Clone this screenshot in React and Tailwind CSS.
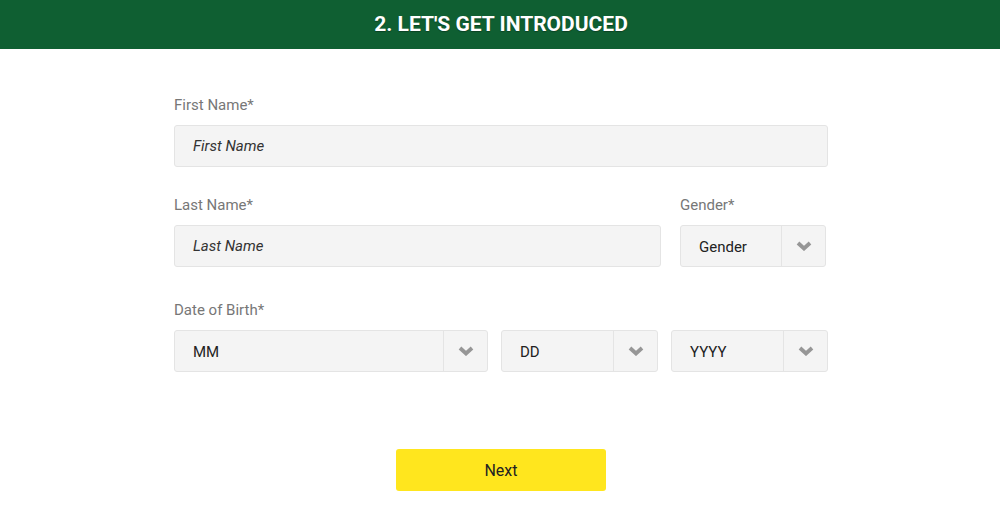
import React from "react";

function Chevron() {
  return (
    <svg width="16" height="10" viewBox="0 0 16 10" className="block">
      <polyline points="2,2 8,7.5 14,2" fill="none" stroke="#969696" strokeWidth="3.8" strokeLinecap="butt" strokeLinejoin="miter" />
    </svg>
  );
}

function Select({ value, className }) {
  return (
    <div className={"flex h-[42px] rounded-[3px] border border-[#e4e4e4] bg-[#f4f4f4] " + className}>
      <div className="flex flex-1 items-center pl-[18px] pt-[2px] text-[15px] text-[#222]">{value}</div>
      <div className="flex w-[44px] items-center justify-center border-l border-[#e4e4e4]">
        <Chevron />
      </div>
    </div>
  );
}

function Input({ placeholder, className }) {
  return (
    <div className={"flex h-[42px] items-center rounded-[3px] border border-[#e4e4e4] bg-[#f4f4f4] pl-[18px] text-[15px] italic text-[#333] " + className}>
      {placeholder}
    </div>
  );
}

function Label({ children }) {
  return <div className="h-[20px] pt-[1px] text-[15px] leading-[20px] text-[#777]">{children}</div>;
}

export default function App() {
  return (
    <div className="min-h-[531px] bg-white" style={{ fontFamily: "Roboto, 'Liberation Sans', sans-serif" }}>
      <div className="flex h-[49px] items-center justify-center bg-[#0f5f32] pl-[2px]">
        <h1 className="text-[21px] font-bold text-white [text-shadow:0_1px_1px_rgba(0,0,0,0.3)]">2. LET'S GET INTRODUCED</h1>
      </div>
      <div className="mx-auto flex w-[654px] translate-x-[1px] flex-col pt-[45px]">
        <Label>First Name*</Label>
        <Input placeholder="First Name" className="mt-[11px]" />
        <div className="mt-[27px] flex gap-[19px]">
          <div className="flex w-[487px] flex-col">
            <Label>Last Name*</Label>
            <Input placeholder="Last Name" className="mt-[11px]" />
          </div>
          <div className="flex w-[146px] flex-col">
            <Label>Gender*</Label>
            <Select value="Gender" className="mt-[11px]" />
          </div>
        </div>
        <div className="mt-[32px]">
          <Label>Date of Birth*</Label>
        </div>
        <div className="mt-[11px] flex gap-[13px]">
          <Select value="MM" className="w-[314px]" />
          <Select value="DD" className="w-[157px]" />
          <Select value="YYYY" className="w-[157px]" />
        </div>
        <div className="mt-[77px] flex justify-center">
          <button className="h-[42px] w-[210px] rounded-[3px] bg-[#ffe61e] pt-[1px] text-[16px] font-normal text-[#222]">Next</button>
        </div>
      </div>
    </div>
  );
}
